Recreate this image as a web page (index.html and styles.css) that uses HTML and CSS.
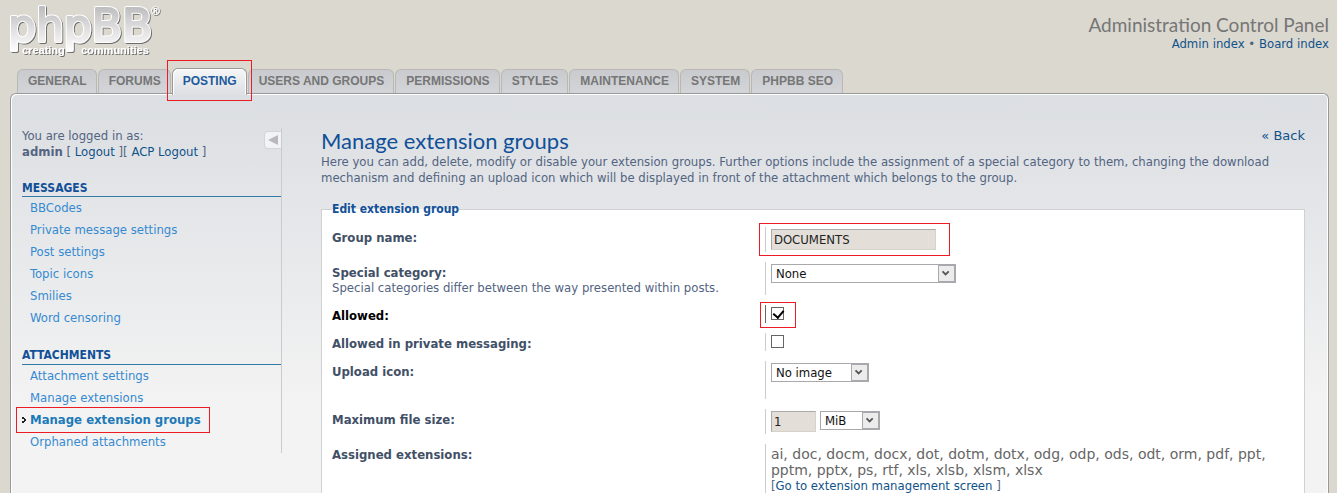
FILE: index.html
```html
<!DOCTYPE html>
<html lang="en">
<head>
<meta charset="utf-8">
<title>Administration Control Panel</title>
<link rel="stylesheet" href="styles.css">
</head>
<body>
<header class="page-header">
  <a class="logo" href="#" aria-label="phpBB creating communities">
    <svg width="170" height="66" viewBox="0 0 170 66">
      <defs>
        <linearGradient id="metal" gradientUnits="userSpaceOnUse" x1="0" y1="6" x2="0" y2="52">
          <stop offset="0" stop-color="#bcbcbe"/>
          <stop offset="0.6" stop-color="#e6e6e7"/>
          <stop offset="1" stop-color="#ffffff"/>
        </linearGradient>
        <filter id="drop" x="-5%" y="-10%" width="115%" height="130%">
          <feDropShadow dx="1" dy="1" stdDeviation="0.7" flood-color="#555" flood-opacity="0.8"/>
        </filter>
      </defs>
      <g filter="url(#drop)">
        <text class="logo-word logo-edge" x="8" y="41">phpBB</text>
        <text class="logo-word logo-fill" x="8" y="41">phpBB</text>
        <text class="logo-reg" x="151" y="15">®</text>
      </g>
      <g filter="url(#drop)">
        <text class="logo-tag" x="22" y="54">creating</text>
        <text class="logo-tag" x="81" y="54">communities</text>
      </g>
    </svg>
  </a>
  <div class="header-info">
    <h1>Administration Control Panel</h1>
    <p><a href="#">Admin index</a> • <a href="#">Board index</a></p>
  </div>
</header>

<nav class="tabs">
  <a class="tab" href="#">GENERAL</a>
  <a class="tab" href="#">FORUMS</a>
  <a class="tab active" href="#">POSTING<span class="mark mark-tab"></span></a>
  <a class="tab" href="#">USERS AND GROUPS</a>
  <a class="tab" href="#">PERMISSIONS</a>
  <a class="tab" href="#">STYLES</a>
  <a class="tab" href="#">MAINTENANCE</a>
  <a class="tab" href="#">SYSTEM</a>
  <a class="tab" href="#">PHPBB SEO</a>
</nav>

<div class="panel">
  <aside class="sidebar">
    <button class="toggle" type="button" aria-label="Hide menu">
      <svg width="10" height="10" viewBox="0 0 10 10"><path d="M0 5 10 0V10Z" fill="#b9b9bd"/></svg>
    </button>
    <p class="session">You are logged in as:<br><strong>admin</strong> [ <a href="#">Logout</a> ][ <a href="#">ACP Logout</a> ]</p>
    <h2>MESSAGES</h2>
    <ul class="menu">
      <li><a href="#">BBCodes</a></li>
      <li><a href="#">Private message settings</a></li>
      <li><a href="#">Post settings</a></li>
      <li><a href="#">Topic icons</a></li>
      <li><a href="#">Smilies</a></li>
      <li><a href="#">Word censoring</a></li>
    </ul>
    <h2>ATTACHMENTS</h2>
    <ul class="menu">
      <li><a href="#">Attachment settings</a></li>
      <li><a href="#">Manage extensions</a></li>
      <li class="current">
        <svg class="arrow" width="4" height="6" viewBox="0 0 4 6" shape-rendering="crispEdges"><path d="M0 0h2v1h1v1h1v2h-1v1h-1v1h-2v-2h2v-2h-2z" fill="#222"/></svg>
        <a href="#">Manage extension groups</a><span class="mark mark-menu"></span>
      </li>
      <li><a href="#">Orphaned attachments</a></li>
    </ul>
  </aside>

  <main class="main">
    <div class="title-row">
      <h1>Manage extension groups</h1>
      <a class="back" href="#">« Back</a>
    </div>
    <p class="intro">Here you can add, delete, modify or disable your extension groups. Further options include the assignment of a special category to them, changing the download mechanism and defining an upload icon which will be displayed in front of the attachment which belongs to the group.</p>

    <form>
      <fieldset>
        <legend>Edit extension group</legend>
        <div class="row">
          <div class="name"><label for="group">Group name:</label></div>
          <div class="value"><input class="field" id="group" type="text" value="DOCUMENTS"><span class="mark mark-group"></span></div>
        </div>
        <div class="row tall">
          <div class="name"><label for="category">Special category:</label><br><span>Special categories differ between the way presented within posts.</span></div>
          <div class="value"><span class="select wide"><select id="category"><option>None</option></select><svg width="17" height="17" viewBox="0 0 17 17"><path d="M4 6l3.500 3.500L11 6" fill="none" stroke="#555" stroke-width="2"/></svg></span></div>
        </div>
        <div class="row hover">
          <div class="name"><label for="allowed">Allowed:</label></div>
          <div class="value"><input class="check" id="allowed" type="checkbox" checked><span class="mark mark-check"></span></div>
        </div>
        <div class="row">
          <div class="name"><label for="allowed-pm">Allowed in private messaging:</label></div>
          <div class="value"><input class="check" id="allowed-pm" type="checkbox"></div>
        </div>
        <div class="row icon-row">
          <div class="name"><label for="icon">Upload icon:</label></div>
          <div class="value"><span class="select medium"><select id="icon"><option>No image</option></select><svg width="17" height="17" viewBox="0 0 17 17"><path d="M4 6l3.500 3.500L11 6" fill="none" stroke="#555" stroke-width="2"/></svg></span></div>
        </div>
        <div class="row">
          <div class="name"><label for="size">Maximum file size:</label></div>
          <div class="value"><input class="field short" id="size" type="text" value="1"><span class="select small"><select id="unit" aria-label="Size unit"><option>MiB</option></select><svg width="17" height="17" viewBox="0 0 17 17"><path d="M4 6l3.500 3.500L11 6" fill="none" stroke="#555" stroke-width="2"/></svg></span></div>
        </div>
        <div class="row">
          <div class="name"><strong>Assigned extensions:</strong></div>
          <div class="value list"><p class="extensions">ai, doc, docm, docx, dot, dotm, dotx, odg, odp, ods, odt, orm, pdf, ppt, pptm, pptx, ps, rtf, xls, xlsb, xlsm, xlsx</p><p>[<a href="#">Go to extension management screen</a> ]</p></div>
        </div>
      </fieldset>
    </form>
  </main>
</div>
</body>
</html>
```
FILE: styles.css
```css
* {
  box-sizing: border-box;
}

body {
  margin: 0;
  min-height: 100vh;
  display: flex;
  flex-direction: column;
  padding: 0 8px 0 10px;
  background: #dbd8d0;
  color: #536482;
  font: 13px/16px "DejaVu Sans Condensed", "DejaVu Sans", Verdana, sans-serif;
}

h1, h2, p, ul {
  margin: 0;
  padding: 0;
  font-weight: normal;
}

a {
  color: #105289;
  text-decoration: none;
}

.page-header {
  display: flex;
  justify-content: space-between;
  height: 68px;
}

.logo svg {
  display: block;
  margin-left: -10px;
}

.logo-word {
  font: 44px "DejaVu Sans", sans-serif;
  stroke-linejoin: round;
}

.logo-edge {
  fill: #fff;
  stroke: #fff;
  stroke-width: 4px;
}

.logo-fill {
  fill: url(#metal);
  stroke: url(#metal);
  stroke-width: 2px;
}

.logo-reg {
  font: bold 12px "Liberation Sans", sans-serif;
  fill: #fff;
}

.logo-tag {
  font: bold 11px "Liberation Sans", sans-serif;
  fill: #fff;
}

.header-info {
  padding-top: 14px;
  text-align: right;
}

.header-info h1 {
  color: #767676;
  font: 19px/22px Lato, "Trebuchet MS", sans-serif;
}

/* Tabs */

.tabs {
  display: flex;
  align-items: flex-end;
  gap: 1px;
  padding-left: 7px;
}

.tab {
  position: relative;
  padding: 0 9px 0 10px;
  border: 1px solid #b9b8b6;
  border-bottom: 0;
  border-radius: 6px 6px 0 0;
  background: linear-gradient(#c8cace, #d3d5d8);
  color: #767676;
  font: bold 12px/23px "Liberation Sans", Arial, sans-serif;
}

.tab.active {
  z-index: 1;
  margin-bottom: -2px;
  padding-top: 1px;
  padding-bottom: 2px;
  border-color: #999;
  background: linear-gradient(#f6f6f7, #dcdfe3);
  box-shadow: inset 1px 1px #fff, inset -1px 0 #fff;
  color: #1f5a9c;
}

.mark {
  position: absolute;
  border: 1px solid #ed1c24;
  pointer-events: none;
}

.mark-tab {
  inset: -9px -6px -6px -6px;
}

/* Panel */

.panel {
  flex: 1;
  display: flex;
  gap: 39px;
  padding: 34px 23px 0 11px;
  border: 1px solid #999;
  border-bottom: 0;
  border-radius: 6px 6px 0 0;
  background: linear-gradient(#dbdee2, #f3f3f3 310px);
  box-shadow: inset 1px 1px #fff, inset -1px 0 #fff;
}

.sidebar {
  position: relative;
  flex: 0 0 260px;
  align-self: flex-start;
  border-right: 1px solid #c9cbce;
}

.toggle {
  position: absolute;
  top: 3px;
  right: 0;
  display: flex;
  align-items: center;
  justify-content: center;
  width: 17px;
  height: 18px;
  padding: 0;
  border: 1px solid #d2d4d8;
  border-right: 0;
  border-radius: 4px 0 0 4px;
  background: #f2f3f4;
}

.session {
  color: #536482;
}

.sidebar h2 {
  margin-top: 20px;
  border-bottom: 1px solid #327aa5;
  color: #115098;
  font-size: 12px;
  font-weight: bold;
}

.menu {
  list-style: none;
  padding-left: 8px;
}

.sidebar .menu + h2 {
  margin-top: 18px;
  padding-bottom: 1px;
}

.menu li {
  position: relative;
  line-height: 22px;
}

.menu a {
  color: #368ad2;
}

.menu .current a {
  color: #1d7ab8;
  font-weight: bold;
}

.arrow {
  position: absolute;
  top: 8px;
  left: -8px;
}

.mark-menu {
  top: -2px;
  left: -14px;
  width: 194px;
  height: 26px;
}

/* Content */

.main {
  flex: 1;
  min-width: 0;
}

.title-row {
  display: flex;
  justify-content: space-between;
}

.title-row h1 {
  color: #115098;
  font: 22px/26px Lato, "Trebuchet MS", sans-serif;
}

.back {
  font-family: "DejaVu Sans", Verdana, sans-serif;
}

fieldset {
  margin: 15px 0 0;
  padding: 10px;
  border: 1px solid #d0d1d4;
  border-bottom: 0;
  background: #fff;
}

legend {
  padding: 0;
  color: #115098;
  font-size: 12px;
  font-weight: bold;
}

.row {
  display: flex;
  margin-bottom: 10px;
}

.name {
  flex: 0 0 45%;
  padding-top: 3px;
  line-height: 15px;
}

.name label, .name strong {
  color: #425067;
  font-weight: bold;
}

.hover .name label {
  color: #000;
}

.value {
  position: relative;
  flex: 1;
  display: flex;
  align-items: flex-start;
  gap: 4px;
  padding: 2px 0 2px 5px;
  border-left: 1px solid #ccc;
}

.hover .value {
  border-left-color: #666;
}

.field {
  width: 165px;
  height: 21px;
  padding: 0 2px;
  border: 1px solid #d5d3c8;
  border-top-color: #aaa;
  border-left-color: #aaa;
  border-radius: 0;
  background: #e3dfd8;
  color: #222;
  font: inherit;
}

.field.short {
  width: 45px;
}

.select {
  position: relative;
  display: inline-flex;
}

.select select {
  appearance: none;
  width: 100%;
  height: 19px;
  padding: 0 20px 0 4px;
  border: 1px solid #a9a9ad;
  border-radius: 0;
  background: #fff;
  color: #111;
  font: inherit;
}

.select svg {
  position: absolute;
  top: 1px;
  right: 1px;
  border: 1px solid #a9a9ad;
  background: #ececec;
  pointer-events: none;
}

.wide {
  width: 185px;
}

.medium {
  width: 98px;
}

.small {
  width: 60px;
}

.check {
  appearance: none;
  display: grid;
  width: 13px;
  height: 13px;
  margin: 0 0 1px;
  border: 1px solid #666;
  background: #fff;
}

.check:checked::before {
  content: "";
  width: 5px;
  height: 8px;
  margin-left: 3px;
  border: solid #000;
  border-width: 0 2px 2px 0;
  transform: rotate(40deg);
}

.tall .value {
  min-height: 33px;
}

.icon-row .value {
  min-height: 38px;
}

.mark-group {
  top: -4px;
  left: -7px;
  width: 191px;
  height: 33px;
}

.mark-check {
  top: -3px;
  left: -6px;
  width: 36px;
  height: 26px;
}

.list {
  display: block;
}

.extensions {
  color: #666;
  font: 14px/16px "DejaVu Sans", Verdana, sans-serif;
}
```
